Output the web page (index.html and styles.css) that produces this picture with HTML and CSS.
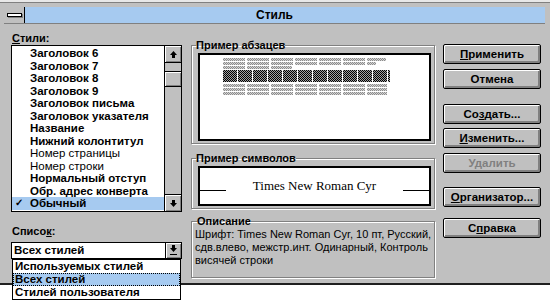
FILE: index.html
```html
<!DOCTYPE html>
<html lang="ru">
<head>
    <meta charset="UTF-8">
    <title>Стиль</title>
    <link rel="stylesheet" href="styles.css">
</head>
<body>
    <div class="window">
        <div class="titlebar">
            <div class="sysmenu"><span class="sysbar"></span></div>
            <div class="title">Стиль</div>
        </div>

        <div class="content">
            <div class="col-left">
                <div class="label"><u>С</u>тили:</div>
                <div class="listbox">
                    <ul class="items">
                        <li class="b">Заголовок 6</li>
                        <li class="b">Заголовок 7</li>
                        <li class="b">Заголовок 8</li>
                        <li class="b">Заголовок 9</li>
                        <li class="b">Заголовок письма</li>
                        <li class="b">Заголовок указателя</li>
                        <li class="b">Название</li>
                        <li class="b">Нижний колонтитул</li>
                        <li>Номер страницы</li>
                        <li>Номер строки</li>
                        <li class="b">Нормальный отступ</li>
                        <li class="b">Обр. адрес конверта</li>
                        <li class="b selected"><span class="check">✓</span>Обычный</li>
                    </ul>
                    <div class="vscroll">
                        <div class="sbtn">
                            <svg width="9" height="9" viewBox="0 0 9 9"><path d="M4.5 1 L8 5 L6 5 L6 8 L3 8 L3 5 L1 5 Z" fill="#000"/></svg>
                        </div>
                        <div class="track"><div class="thumb"></div></div>
                        <div class="sbtn">
                            <svg width="9" height="9" viewBox="0 0 9 9"><path d="M4.5 8 L8 4 L6 4 L6 1 L3 1 L3 4 L1 4 Z" fill="#000"/></svg>
                        </div>
                    </div>
                </div>

                <div class="label list-label">Списо<u>к</u>:</div>
                <div class="combo">
                    <div class="combo-value">Всех стилей</div>
                    <div class="combo-btn">
                        <svg width="9" height="11" viewBox="0 0 9 11"><path d="M4.5 7 L8 3 L6 3 L6 0 L3 0 L3 3 L1 3 Z" fill="#000"/><rect x="1" y="9" width="7" height="1" fill="#000"/></svg>
                    </div>
                    <ul class="dropdown">
                        <li>Используемых стилей</li>
                        <li class="selected">Всех стилей</li>
                        <li>Стилей пользователя</li>
                    </ul>
                </div>
            </div>

            <div class="col-mid">
                <fieldset class="group group-para">
                    <legend>Пример абзацев</legend>
                    <div class="preview">
                        <div class="pline grey" style="width: 163px"></div>
                        <div class="pline grey" style="width: 153px"></div>
                        <div class="pline grey" style="width: 69px"></div>
                        <div class="pline dark first-dark" style="width: 167px"></div>
                        <div class="pline dark" style="width: 167px"></div>
                        <div class="pline dark" style="width: 167px"></div>
                        <div class="pline grey first-after" style="width: 164px"></div>
                        <div class="pline grey" style="width: 164px"></div>
                        <div class="pline grey" style="width: 164px"></div>
                    </div>
                </fieldset>

                <fieldset class="group group-chars">
                    <legend>Пример символов</legend>
                    <div class="preview sample">
                        <span class="rule"></span>
                        <span class="sample-text">Times New Roman Cyr</span>
                        <span class="rule"></span>
                    </div>
                </fieldset>

                <fieldset class="group group-desc">
                    <legend>Описание</legend>
                    <div class="desc">
                        Шрифт: Times New Roman Cyr, 10 пт, Русский,<br>
                        сдв.влево, межстр.инт. Одинарный, Контроль<br>
                        висячей строки
                    </div>
                </fieldset>
            </div>

            <div class="col-right">
                <button class="btn"><u>П</u>рименить</button>
                <button class="btn gap-5">Отмена</button>
                <button class="btn gap-15">Со<u>з</u>дать...</button>
                <button class="btn gap-4"><u>И</u>зменить...</button>
                <button class="btn gap-5 disabled">Удалить</button>
                <button class="btn gap-14"><u>О</u>рганизатор...</button>
                <button class="btn gap-11">С<u>п</u>равка</button>
            </div>
        </div>
    </div>
</body>
</html>
```

FILE: styles.css
```css
html, body {
    height: 100%;
}

body {
    margin: 0;
    background: #ffffff;
    font-family: 'Liberation Sans', Arial, sans-serif;
    font-size: 11px;
    color: #000;
}

.window {
    height: 276px;
    background: #c0c0c0;
    border-top: 2px solid #e8e8e8;
    box-shadow: inset 0 1px 0 #808080;
    border-bottom: 2px solid #202020;
    padding-top: 5px;
}

.titlebar {
    display: flex;
    height: 16px;
    margin: 0 5px 0 4px;
    background: #a6caf0;
    border-bottom: 1px solid #808080;
}

.sysmenu {
    width: 20px;
    background: #c0c0c0;
    border-right: 1px solid #000;
    display: flex;
    align-items: center;
    justify-content: center;
}

.sysbar {
    width: 13px;
    height: 2px;
    background: #fff;
    border: 1px solid #000;
    box-shadow: 1px 1px 0 #808080;
}

.title {
    flex: 1;
    text-align: center;
    font-weight: bold;
    font-size: 12px;
    line-height: 16px;
    padding-right: 21px;
}

.content {
    display: flex;
}

.col-left {
    width: 171px;
    margin-left: 11px;
    margin-top: 8px;
}

.label {
    font-weight: bold;
    height: 13px;
    line-height: 13px;
    padding-left: 1px;
}

.listbox {
    display: flex;
    height: 165px;
    border: 1px solid #000;
    background: #fff;
}

.items {
    list-style: none;
    margin: 0;
    padding: 1px 0 0 0;
    flex: 1;
}

.items li {
    height: 12.5px;
    line-height: 12.5px;
    padding-left: 18px;
    white-space: nowrap;
    position: relative;
    font-size: 11.5px;
}

.items li.b {
    font-weight: bold;
}

.items li.selected {
    background: #a6caf0;
}

.check {
    position: absolute;
    left: 3px;
    font-size: 10px;
    font-weight: bold;
}

.vscroll {
    width: 16px;
    border-left: 1px solid #000;
    display: flex;
    flex-direction: column;
    background: #c0c0c0;
}

.sbtn {
    height: 16px;
    background: #c0c0c0;
    box-shadow: inset 1px 1px 0 #fff, inset -1px -1px 0 #808080;
    display: flex;
    align-items: center;
    justify-content: center;
}

.sbtn:first-child {
    border-bottom: 1px solid #000;
}

.sbtn:last-child {
    border-top: 1px solid #000;
}

.track {
    flex: 1;
    padding-top: 8px;
}

.thumb {
    height: 14px;
    background: #c0c0c0;
    border-top: 1px solid #000;
    border-bottom: 1px solid #000;
    box-shadow: inset 1px 1px 0 #fff, inset -1px -1px 0 #808080;
}

.list-label {
    margin-top: 13px;
    margin-bottom: 4px;
}

.combo {
    display: flex;
    height: 15px;
    border: 1px solid #000;
    background: #fff;
    position: relative;
}

.combo-value {
    flex: 1;
    padding-left: 2px;
    line-height: 15px;
    font-weight: bold;
    font-size: 11.5px;
}

.combo-btn {
    width: 15px;
    border-left: 1px solid #000;
    background: #c0c0c0;
    box-shadow: inset 1px 1px 0 #fff, inset -1px -1px 0 #808080;
    display: flex;
    align-items: center;
    justify-content: center;
}

.dropdown {
    position: absolute;
    top: 16px;
    left: 0;
    right: 0;
    margin: 0;
    padding: 0;
    list-style: none;
    background: #fff;
    border: 1px solid #000;
    font-weight: bold;
    font-size: 11.5px;
}

.dropdown li {
    height: 13px;
    line-height: 13px;
    padding-left: 2px;
}

.dropdown li.selected {
    background: #a6caf0;
    outline: 1px dotted #000;
    outline-offset: -1px;
}

.col-mid {
    width: 244px;
    margin-left: 9px;
    margin-top: 15px;
}

.group {
    margin: 0;
    padding: 2px 3px 2px 6px;
    border: 1px solid #808080;
    box-shadow: inset 1px 1px 0 #fff, 1px 1px 0 #fff;
}

.group legend {
    font-weight: bold;
    padding: 0;
    line-height: 12px;
    margin-left: -2px;
}

.preview {
    background: #fff;
    border: 2px solid #000;
}

.group-para .preview {
    height: 81px;
    padding: 3px 0 0 23px;
    box-sizing: content-box;
}

.pline {
    height: 3px;
    margin-bottom: 1px;
}

.pline.grey {
    background:
        repeating-linear-gradient(90deg, transparent 0 22px, #fff 22px 24px),
        repeating-conic-gradient(#8c8c8c 0 25%, #d4d4d4 0 50%) 0 0 / 2px 2px;
}

.pline.dark {
    height: 4px;
    margin-bottom: 0;
    background:
        repeating-linear-gradient(90deg, transparent 0 14px, #fff 14px 15px),
        repeating-conic-gradient(#000 0 25%, #a0a0a0 0 50%) 0 0 / 2px 2px;
}

.pline.first-dark {
    margin-top: 1px;
}

.pline.first-after {
    margin-top: 2px;
}

.group-chars {
    margin-top: 8px;
}

.sample {
    height: 36px;
    display: flex;
    align-items: center;
    justify-content: space-between;
}

.sample-text {
    font-family: 'Liberation Serif', 'Times New Roman', serif;
    font-size: 13px;
}

.rule {
    width: 26px;
    height: 1px;
    background: #000;
    margin-top: 9px;
}

.group-desc {
    margin-top: 6px;
    padding: 1px 3px 10px 3px;
}

.group-desc legend {
    margin-left: 2px;
}

.desc {
    line-height: 13px;
    white-space: nowrap;
}

.col-right {
    width: 98px;
    margin-left: 8px;
    margin-top: 20px;
    display: flex;
    flex-direction: column;
}

.btn {
    height: 20px;
    padding: 0;
    font-family: 'Liberation Sans', Arial, sans-serif;
    font-size: 11.5px;
    font-weight: bold;
    color: #000;
    background: #c0c0c0;
    border: 1px solid #000;
    border-radius: 2px;
    box-shadow: inset 1px 1px 0 #fff, inset -1px -1px 0 #808080, inset -2px -2px 0 #808080;
}

.btn.disabled {
    color: #808080;
}

.gap-4 { margin-top: 4px; }
.gap-5 { margin-top: 5px; }
.gap-11 { margin-top: 11px; }
.gap-14 { margin-top: 14px; }
.gap-15 { margin-top: 15px; }
```
